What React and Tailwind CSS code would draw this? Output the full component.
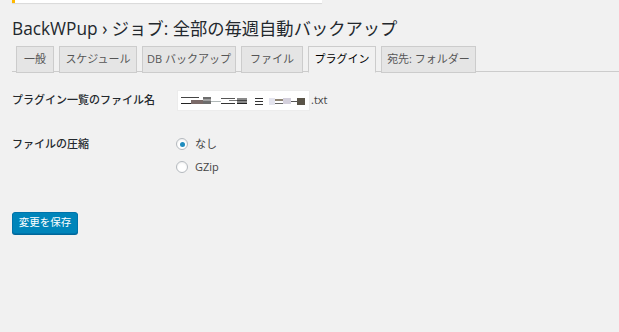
const font = { fontFamily: '"Open Sans", "Noto Sans CJK JP", sans-serif' };

const tabs = [
  { label: "一般", w: "w-[38px]" },
  { label: "スケジュール", w: "w-[78px]" },
  { label: "DB バックアップ", w: "w-[94px]" },
  { label: "ファイル", w: "w-[62px]" },
  { label: "プラグイン", w: "w-[68px]", active: true },
  { label: "宛先: フォルダー", w: "w-[95px]" },
];

const Mosaic = () => (
  <svg width="126" height="12" viewBox="0 0 126 12">
    <rect x="0" y="2" width="18" height="1" fill="#444" />
    <rect x="0" y="8" width="20" height="1" fill="#222" />
    <rect x="10" y="5" width="12" height="4" fill="#7a6a68" />
    <rect x="22" y="2" width="8" height="7" fill="#6d6d6d" />
    <rect x="22" y="4" width="8" height="2" fill="#a0a0a0" />
    <rect x="30" y="6" width="10" height="1" fill="#b0b8b8" />
    <rect x="40" y="3" width="14" height="1" fill="#555" />
    <rect x="40" y="8" width="14" height="1" fill="#333" />
    <rect x="48" y="5" width="8" height="1" fill="#777" />
    <rect x="56" y="3" width="10" height="6" fill="#8a8a8a" />
    <rect x="56" y="5" width="10" height="1" fill="#444" />
    <rect x="56" y="8" width="10" height="1" fill="#222" />
    <rect x="74" y="3" width="8" height="1" fill="#333" />
    <rect x="74" y="6" width="8" height="1" fill="#333" />
    <rect x="74" y="9" width="8" height="1" fill="#333" />
    <rect x="88" y="3" width="6" height="7" fill="#e4e4ee" />
    <rect x="94" y="4" width="8" height="2" fill="#8e8474" />
    <rect x="94" y="8" width="8" height="1" fill="#666" />
    <rect x="102" y="3" width="8" height="6" fill="#d4d0dc" />
    <rect x="110" y="6" width="6" height="1" fill="#555" />
    <rect x="116" y="3" width="8" height="7" fill="#5a5448" />
  </svg>
);

const Radio = ({ checked, label }) => (
  <label className="flex items-center gap-[7px] h-[20px] text-[11px] text-[#444]">
    <span className="w-[12px] h-[12px] rounded-full border border-[#b4b9be] bg-white flex items-center justify-center shadow-[inset_0_1px_2px_rgba(0,0,0,0.07)]">
      {checked && <span className="w-[5px] h-[5px] rounded-full bg-[#1e8cbe]" />}
    </span>
    {label}
  </label>
);

export default function App() {
  return (
    <div className="w-[619px] h-[332px] bg-[#f1f1f1] overflow-hidden" style={font}>
      <div className="ml-[12px] w-[310px] h-[3px] bg-white border-l-[3px] border-[#ffb900] shadow-[0_1px_1px_rgba(0,0,0,0.1)]" />

      <h1 className="ml-[12px] mt-[14px] h-[24px] leading-[24px] text-[17.3px] text-[#23282d]">
        BackWPup › ジョブ: 全部の毎週自動バックアップ
      </h1>

      <div className="ml-[12px] mt-[5px] flex border-b border-[#ccc] h-[26px]">
        {tabs.map((t, i) => (
          <div
            key={t.label}
            className={`${t.w} ${i === 0 ? "ml-[4px]" : "ml-[5px]"} h-[27px] border border-[#ccc] flex items-center justify-center text-[11px] whitespace-nowrap ${
              t.active
                ? "bg-[#f1f1f1] text-black border-b-[#f1f1f1]"
                : "bg-[#e5e5e5] text-[#555]"
            }`}
          >
            {t.label}
          </div>
        ))}
      </div>

      <div className="ml-[12px] mt-[18px] flex items-center">
        <div className="w-[165px] text-[11px] font-medium text-[#23282d]">
          プラグイン一覧のファイル名
        </div>
        <div className="flex items-center">
          <div className="w-[133px] h-[21px] bg-white border border-[#ececec] flex items-center pl-[3px]">
            <Mosaic />
          </div>
          <span className="text-[11px] text-[#444] ml-[1px]">.txt</span>
        </div>
      </div>

      <div className="ml-[12px] mt-[23px] flex items-start">
        <div className="w-[164px] text-[11px] font-medium text-[#23282d] h-[20px] leading-[20px]">
          ファイルの圧縮
        </div>
        <div className="flex flex-col gap-[3px]">
          <Radio checked label="なし" />
          <Radio label="GZip" />
        </div>
      </div>

      <button className="ml-[12px] mt-[35px] w-[66px] h-[22px] rounded-[3px] bg-[#0085ba] border border-[#0073aa] text-white text-[10.5px] shadow-[0_1px_0_#006799]">
        変更を保存
      </button>
    </div>
  );
}
